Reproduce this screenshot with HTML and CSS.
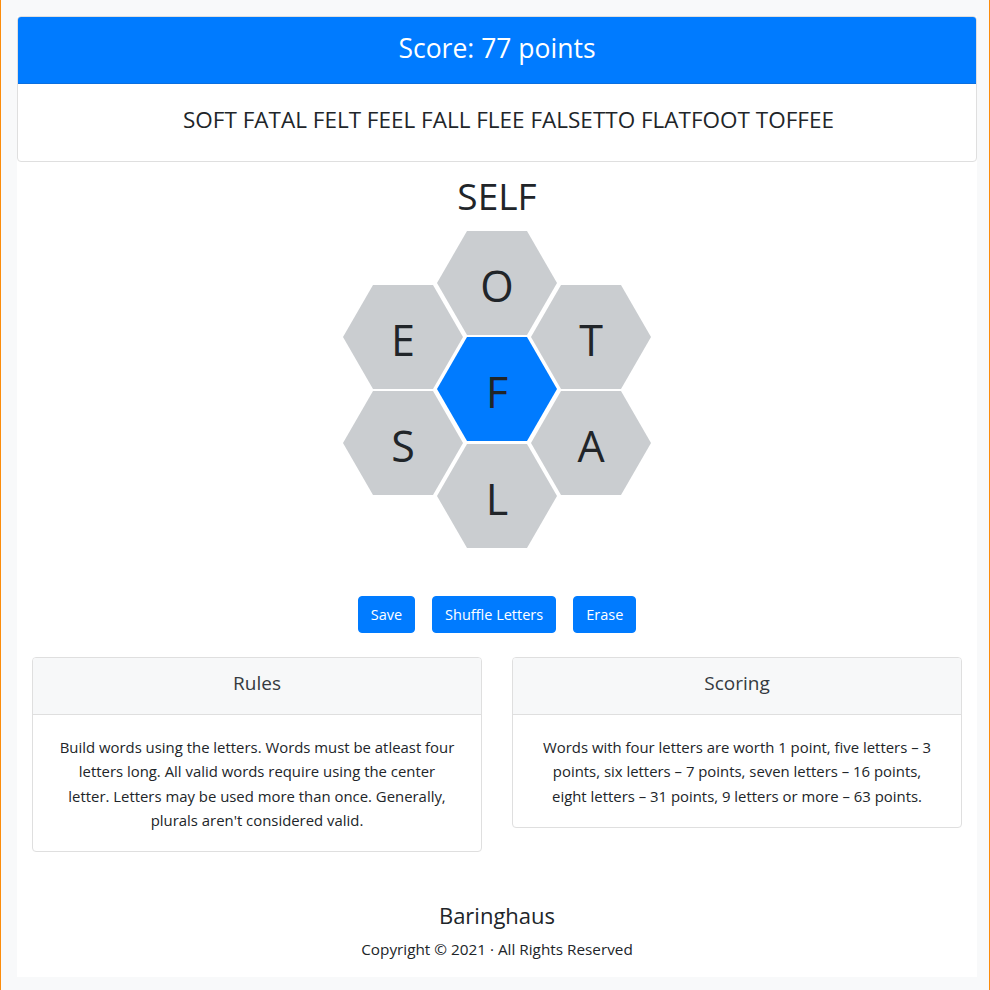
FILE: index.html
```html
<!DOCTYPE html>
<html lang="en">
<head>
<meta charset="utf-8">
<title>Spelling Bee</title>
<link rel="stylesheet" href="styles.css">
</head>
<body>
<div class="container">
  <div class="score-card">
    <div class="score-header">Score: 77 points</div>
    <div class="score-body">SOFT FATAL FELT FEEL FALL FLEE FALSETTO FLATFOOT TOFFEE</div>
  </div>

  <h1 class="current-word">SELF</h1>

  <div class="hive">
    <div class="hex hex-o">O</div>
    <div class="hex hex-e">E</div>
    <div class="hex hex-t">T</div>
    <div class="hex hex-f center">F</div>
    <div class="hex hex-s">S</div>
    <div class="hex hex-a">A</div>
    <div class="hex hex-l">L</div>
  </div>

  <div class="actions">
    <button class="btn">Save</button>
    <button class="btn">Shuffle Letters</button>
    <button class="btn">Erase</button>
  </div>

  <div class="info-row">
    <div class="info-card">
      <div class="info-header">Rules</div>
      <div class="info-body">Build words using the letters. Words must be atleast four letters long. All valid words require using the center letter. Letters may be used more than once. Generally, plurals aren't considered valid.</div>
    </div>
    <div class="info-card">
      <div class="info-header">Scoring</div>
      <div class="info-body">Words with four letters are worth 1 point, five letters – 3 points, six letters – 7 points, seven letters – 16 points, eight letters – 31 points, 9 letters or more – 63 points.</div>
    </div>
  </div>

  <footer class="footer">
    <div class="brand">Baringhaus</div>
    <div class="copyright">Copyright © 2021 · All Rights Reserved</div>
  </footer>
</div>
</body>
</html>
```

FILE: styles.css
```css
* { box-sizing: border-box; }

html { background: #f8f9fa; }

body {
  margin: 0;
  min-height: 990px;
  background: #f8f9fa;
  border-left: 1px solid #fb8c0c;
  border-right: 1px solid #fb8c0c;
  padding: 16px 0 0 16px;
  font-family: "Open Sans", "Noto Sans", sans-serif;
  color: #212529;
}

.container {
  width: 960px;
  background: #ffffff;
  padding-bottom: 16px;
}

.score-card {
  border: 1px solid #dfdfdf;
  border-radius: 4px;
  overflow: hidden;
  text-align: center;
}

.score-header {
  background: #007bff;
  color: #ffffff;
  height: 67px;
  display: flex;
  align-items: center;
  justify-content: center;
  font-size: 26.5px;
  padding-bottom: 4px;
  border-bottom: 1px solid #0a6fe0;
}

.score-body {
  height: 77px;
  display: flex;
  align-items: center;
  justify-content: center;
  font-size: 22.5px;
  padding: 0 0 7px 23px;
}

.current-word {
  margin: 10px 0 0;
  font-size: 37px;
  font-weight: 400;
  line-height: 48px;
  text-align: center;
}

.hive {
  position: relative;
  width: 308px;
  height: 318px;
  margin: 11px auto 0;
}

.hex {
  position: absolute;
  width: 120px;
  height: 104px;
  background: #cacdd0;
  clip-path: polygon(25% 0, 75% 0, 100% 50%, 75% 100%, 25% 100%, 0 50%);
  display: flex;
  align-items: center;
  justify-content: center;
  font-size: 43px;
  padding-top: 4px;
  color: #212529;
}

.hex.center { background: #007bff; }

.hex-o { left: 94px; top: 0; }
.hex-e { left: 0; top: 54px; }
.hex-t { left: 188px; top: 54px; }
.hex-f { left: 94px; top: 106px; }
.hex-s { left: 0; top: 160px; }
.hex-a { left: 188px; top: 160px; }
.hex-l { left: 94px; top: 213px; }

.actions {
  display: flex;
  justify-content: center;
  gap: 17px;
  margin-top: 47px;
}

.btn {
  background: #007bff;
  color: #ffffff;
  border: 1px solid #007bff;
  border-radius: 4px;
  font-family: inherit;
  font-size: 14.5px;
  height: 37px;
  padding: 0 12px;
}

.info-row {
  display: grid;
  grid-template-columns: 1fr 1fr;
  gap: 30px;
  padding: 0 15px;
  margin-top: 24px;
  align-items: start;
}

.info-card {
  border: 1px solid #dfdfdf;
  border-radius: 4px;
  overflow: hidden;
  text-align: center;
}

.info-header {
  background: #f7f8f9;
  border-bottom: 1px solid #dfdfdf;
  height: 57px;
  display: flex;
  align-items: center;
  justify-content: center;
  font-size: 19px;
  padding-bottom: 6px;
  color: #343a40;
}

.info-body {
  padding: 20px 24px 19px;
  font-size: 14.9px;
  line-height: 24.3px;
}

.footer {
  text-align: center;
  margin-top: 48px;
}

.brand {
  font-size: 22px;
  line-height: 30px;
}

.copyright {
  font-size: 15.3px;
  line-height: 24px;
  margin-top: 7px;
}
```
